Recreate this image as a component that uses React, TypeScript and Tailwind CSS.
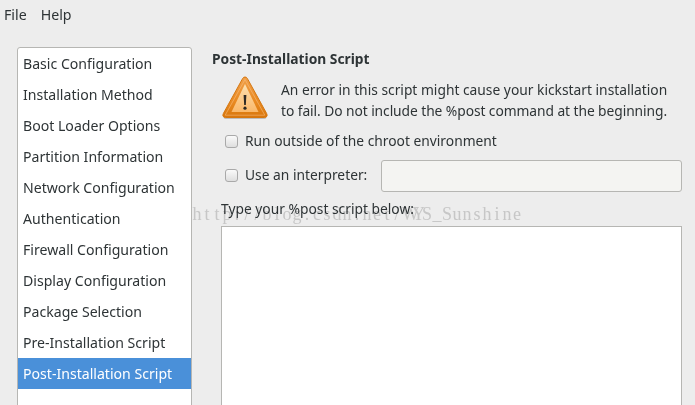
const sections = [
  'Basic Configuration',
  'Installation Method',
  'Boot Loader Options',
  'Partition Information',
  'Network Configuration',
  'Authentication',
  'Firewall Configuration',
  'Display Configuration',
  'Package Selection',
  'Pre-Installation Script',
  'Post-Installation Script',
];

const watermark = 'http://blog.csdn.net/WYS_Sunshine';

function WarningIcon() {
  return (
    <svg width="48" height="48" viewBox="0 0 48 48" className="shrink-0">
      <defs>
        <linearGradient id="warnOuter" x1="0" y1="0" x2="0" y2="1">
          <stop offset="0" stopColor="#f0a04a" />
          <stop offset="0.6" stopColor="#e98a22" />
          <stop offset="1" stopColor="#d9770c" />
        </linearGradient>
        <linearGradient id="warnInner" x1="0" y1="0" x2="0" y2="1">
          <stop offset="0" stopColor="#fde0b0" />
          <stop offset="1" stopColor="#fab86a" />
        </linearGradient>
      </defs>
      <path d="M2 46.5 H46 L44 48 H4 Z" fill="#000" opacity="0.2" />
      <path
        d="M24 6 C25 6 25.8 6.5 26.3 7.4 L45.6 42.4 C46.8 44.6 45.8 46.5 43.4 46.5 L4.6 46.5 C2.2 46.5 1.2 44.6 2.4 42.4 L21.7 7.4 C22.2 6.5 23 6 24 6 Z"
        fill="url(#warnOuter)"
        stroke="#d5760f"
        strokeWidth="1"
      />
      <path d="M24 8.5 L43.8 44.2 H4.2 Z" fill="none" stroke="#f8c184" strokeWidth="0.8" opacity="0.7" />
      <path d="M24 13 L37.5 41 H10.5 Z" fill="url(#warnInner)" />
      <path d="M22.6 24 H25.4 L24.8 34 H23.2 Z" fill="#2e2a25" />
      <circle cx="24" cy="37.2" r="1.6" fill="#2e2a25" />
    </svg>
  );
}

function Check({ label }: { label: string }) {
  return (
    <label className="flex items-center gap-[7px]">
      <span className="h-[13px] w-[13px] rounded-[3px] border border-[#a9a9a9] bg-gradient-to-b from-[#fafafa] to-[#dedede]" />
      <span>{label}</span>
    </label>
  );
}

export default function App() {
  return (
    <div className="relative h-[405px] w-[695px] overflow-hidden bg-[#ededed] font-['Noto_Sans',sans-serif] text-[13.8px] text-[#2e3436]">
      <div className="flex h-[29px] items-center gap-[14px] pl-1 text-[14.2px]">
        <span>File</span>
        <span>Help</span>
      </div>

      <div className="flex items-start pl-[17px] pt-[18px]">
        <ul className="h-[400px] w-[175px] shrink-0 rounded-t-[3px] border border-[#b6b6b3] bg-white text-[14.1px]">
          {sections.map((name, i) => (
            <li
              key={name}
              className={`flex h-[31px] items-center pl-[5px] ${i === 10 ? 'bg-[#4a90d9] text-white' : ''}`}
            >
              {name}
            </li>
          ))}
        </ul>

        <div className="ml-[20px] flex-1">
          <h2 className="h-[24px] pt-[3px] font-bold leading-[18px]">Post-Installation Script</h2>
          <div className="ml-[9px] flex gap-[10px]">
            <WarningIcon />
            <p className="ml-[2px] pt-[8px] leading-[21px]">
              An error in this script might cause your kickstart installation
              <br />
              <span className="tracking-[-0.07px]">to fail. Do not include the %post command at the beginning.</span>
            </p>
          </div>
          <div className="ml-[13px] mt-[10px]">
            <Check label="Run outside of the chroot environment" />
          </div>
          <div className="ml-[13px] mt-[8px] flex items-center">
            <div className="w-[156px]">
              <Check label="Use an interpreter:" />
            </div>
            <div className="h-[32px] w-[301px] rounded-[3px] border border-[#b6b6b3] bg-[#f4f4f2]" />
          </div>
          <p className="ml-[9px] mt-[8px] leading-[18px]">Type your %post script below:</p>
          <div className="ml-[9px] mt-[8px] h-[200px] w-[461px] border border-[#b6b6b3] bg-white" />
        </div>
      </div>

      <div className="pointer-events-none absolute left-[192px] top-[204px] flex font-['Liberation_Serif',serif] text-[18px] leading-5 text-[#d6d6d6] mix-blend-multiply">
        {watermark.split('').map((ch, i) => (
          <span key={i} className="w-[10px] text-center">
            {ch}
          </span>
        ))}
      </div>
    </div>
  );
}
